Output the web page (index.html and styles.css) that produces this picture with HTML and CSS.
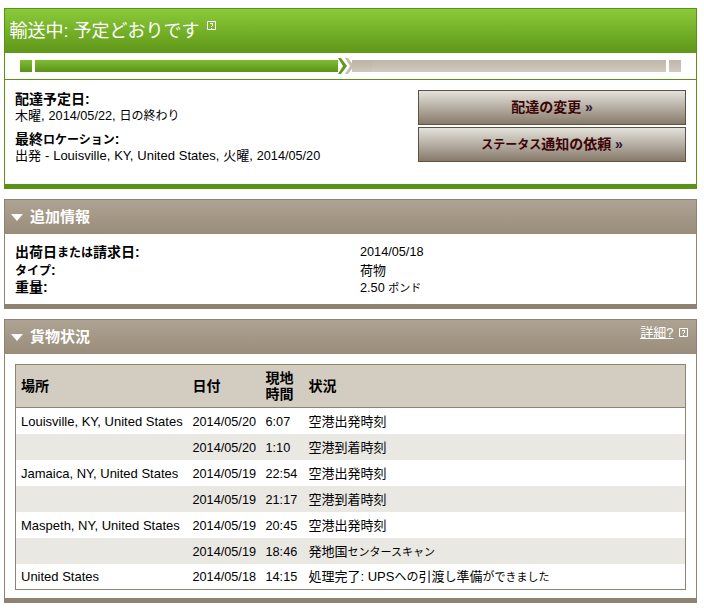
FILE: index.html
```html
<!DOCTYPE html>
<html lang="ja">
<head>
<meta charset="utf-8">
<title>追跡</title>
<link rel="stylesheet" href="styles.css">
</head>
<body>
<section class="status-card">
  <h1 class="status-title">輸送中: 予定どおりです <span class="title-help"><svg class="help" width="9" height="9" viewBox="0 0 9 9"><path class="help-box" d="M.5.5h8v8h-8z"/><path class="help-q" d="M3 2h3v3h-1v1h-1v-1h1v-2h-2zM4 7h1v1h-1z"/></svg></span></h1>
  <div class="progress">
    <div class="seg seg-done seg-start"></div>
    <div class="seg seg-done seg-long"></div>
    <svg class="chevron" width="17" height="18" viewBox="0 0 17 18"><path class="chev-gray" d="M8 1h3l6 8-6 8H8l5-8z"/><path class="chev-halo" d="M0 0h5l7 9-7 9H0l5-9z"/><path class="chev-green" d="M1 1h3l6 8-6 8H1l5-8z"/></svg>
    <div class="seg seg-todo seg-dark"></div>
    <div class="seg seg-todo seg-fill"></div>
    <div class="seg seg-todo seg-end"></div>
  </div>
  <div class="status-body">
    <div class="delivery">
      <div class="info-block">
        <strong>配達予定日:</strong>
        <div class="info-line">木曜, <span class="num">2014/05/22</span>, <span class="k">日の終わり</span></div>
      </div>
      <div class="info-block">
        <strong>最終<span class="k">ロケーション</span>:</strong>
        <div class="info-line">出発 - Louisville, KY, United States, 火曜, <span class="num">2014/05/20</span></div>
      </div>
    </div>
    <div class="actions">
      <a class="btn" href="#">配達の変更 <span class="raquo">»</span></a>
      <a class="btn" href="#"><span class="k">ステータス</span>通知の依頼 <span class="raquo">»</span></a>
    </div>
  </div>
</section>

<section class="panel">
  <header class="panel-head">
    <h2 class="panel-title"><span class="tri"></span>追加情報</h2>
  </header>
  <dl class="details">
    <dt>出荷日<span class="k">または</span>請求日:</dt><dd class="num">2014/05/18</dd>
    <dt><span class="k">タイプ</span>:</dt><dd>荷物</dd>
    <dt>重量:</dt><dd><span class="num">2.50</span> <span class="kk">ポンド</span></dd>
  </dl>
</section>

<section class="panel">
  <header class="panel-head">
    <h2 class="panel-title"><span class="tri"></span>貨物状況</h2>
    <div class="more"><a class="more-link" href="#">詳細?</a> <svg class="help" width="9" height="9" viewBox="0 0 9 9"><path class="help-box" d="M.5.5h8v8h-8z"/><path class="help-q" d="M3 2h3v3h-1v1h-1v-1h1v-2h-2zM4 7h1v1h-1z"/></svg></div>
  </header>
  <div class="table-wrap">
    <table class="history">
      <colgroup><col class="c-loc"><col class="c-date"><col class="c-time"><col></colgroup>
      <thead>
        <tr><th>場所</th><th>日付</th><th>現地<br>時間</th><th>状況</th></tr>
      </thead>
      <tbody>
        <tr><td>Louisville, KY, United States</td><td class="num">2014/05/20</td><td class="num">6:07</td><td>空港出発時刻</td></tr>
        <tr><td></td><td class="num">2014/05/20</td><td class="num">1:10</td><td>空港到着時刻</td></tr>
        <tr><td>Jamaica, NY, United States</td><td class="num">2014/05/19</td><td class="num">22:54</td><td>空港出発時刻</td></tr>
        <tr><td></td><td class="num">2014/05/19</td><td class="num">21:17</td><td>空港到着時刻</td></tr>
        <tr><td>Maspeth, NY, United States</td><td class="num">2014/05/19</td><td class="num">20:45</td><td>空港出発時刻</td></tr>
        <tr><td></td><td class="num">2014/05/19</td><td class="num">18:46</td><td>発地国<span class="kk">センタースキャン</span></td></tr>
        <tr><td>United States</td><td class="num">2014/05/18</td><td class="num">14:15</td><td>処理完了: UPS<span class="k">への</span>引渡<span class="k">し</span>準備<span class="k">が</span><span class="kk">できました</span></td></tr>
      </tbody>
    </table>
  </div>
</section>
</body>
</html>
```
FILE: styles.css
```css
* { box-sizing: border-box; }
html, body { margin: 0; padding: 0; background: #fff; }
body {
  width: 704px;
  height: 608px;
  overflow: hidden;
  padding: 8px 7px 0 4px;
  font-family: "Liberation Sans", "Noto Sans CJK JP", sans-serif;
  font-size: 13px;
  line-height: 16px;
  color: #000;
}
h1, h2, dl, dd { margin: 0; }
.num { font-size: 12.700px; }
.k { font-size: 12px; }
.kk { font-size: 11px; }

/* Status card */
.status-card {
  height: 181px;
  border: 1px solid #5a9216;
  border-bottom: 5px solid #5a9216;
}
.status-title {
  height: 44px;
  padding-left: 4.500px;
  font-size: 18px;
  line-height: 44px;
  font-weight: 400;
  color: #fff;
  background: linear-gradient(#8bca3a, #5f9718);
}
.title-help { position: relative; top: -7px; margin-left: 2px; }
.help { display: inline-block; }
.help-box { fill: none; stroke: #fff; stroke-width: 1; }
.help-q { fill: #fff; }

.progress {
  display: flex;
  align-items: center;
  height: 27px;
  padding: 0 15px;
  border-bottom: 1px solid #5a9216;
}
.seg { height: 12px; }
.seg-done { background: linear-gradient(#80bd31, #5a9216); }
.seg-todo { background: linear-gradient(#c0b6aa, #d2cabe); }
.seg-start { width: 12px; margin-right: 3px; }
.seg-long { width: 303px; }
.chevron { margin: 0 -2px 0 -1px; flex: none; }
.chev-halo { fill: #fff; }
.chev-gray { fill: #c8bfb3; }
.chev-green { fill: #5f9a1c; }
.seg-dark { width: 20px; background: linear-gradient(#bdb3a6, #cfc7bb); }
.seg-fill { width: 294px; margin-right: 3px; }
.seg-end { width: 12px; }

.status-body {
  display: flex;
  justify-content: space-between;
  padding: 10px 10px 0 10px;
}
.delivery { padding-top: 1px; }
.info-block { margin-bottom: 7px; }
.info-block strong { display: block; height: 17px; font-weight: 700; font-size: 14px; }
.info-line { height: 16px; word-spacing: 0.300px; }
.actions { display: flex; flex-direction: column; gap: 2px; width: 268px; }
.btn {
  display: block;
  height: 35px;
  border: 1px solid #5e5140;
  background: linear-gradient(#e4e2dc, #877a6a);
  color: #3c0505;
  font-weight: 700;
  font-size: 14px;
  line-height: 33px;
  text-align: center;
  text-decoration: none;
}
.raquo { font-size: 14px; color: #2a1a3a; }

/* Panels */
.panel {
  margin-top: 10px;
  border: 1px solid #8f8270;
  border-bottom: 5px solid #8f8270;
}
.panel-head {
  display: flex;
  justify-content: space-between;
  height: 34px;
  background: linear-gradient(#aea392, #998c7a);
}
.panel-title {
  display: flex;
  align-items: center;
  padding-left: 6px;
  font-size: 15px;
  font-weight: 700;
  color: #fff;
}
.tri {
  width: 0;
  height: 0;
  margin-right: 7px;
  border-left: 6.500px solid transparent;
  border-right: 6.500px solid transparent;
  border-top: 7px solid #fff;
}
.more { padding: 5px 8px 0 0; color: #fff; }
.more-link { color: #fff; margin-right: 2px; }

.details {
  display: grid;
  grid-template-columns: 345px 1fr;
  grid-auto-rows: 17.500px;
  padding: 10px 10px 7.500px;
  line-height: 17.500px;
}
.details dt { font-weight: 700; font-size: 14px; }

.table-wrap { padding: 10px 9px 8px 10px; }
.history {
  width: 671px;
  border-collapse: collapse;
  table-layout: fixed;
  border: 1px solid #8f8270;
}
.c-loc { width: 172px; }
.c-date { width: 73px; }
.c-time { width: 43px; }
.history th {
  height: 43px;
  padding: 0 5px;
  background: #d3ccc0;
  border-bottom: 1px solid #8f8270;
  text-align: left;
  font-weight: 700;
  font-size: 14px;
  line-height: 16px;
}
.history td {
  height: 26px;
  padding: 2px 5px 0;
  white-space: nowrap;
}
.history tbody tr:nth-child(even) td { background: #e9e8e3; }
```
